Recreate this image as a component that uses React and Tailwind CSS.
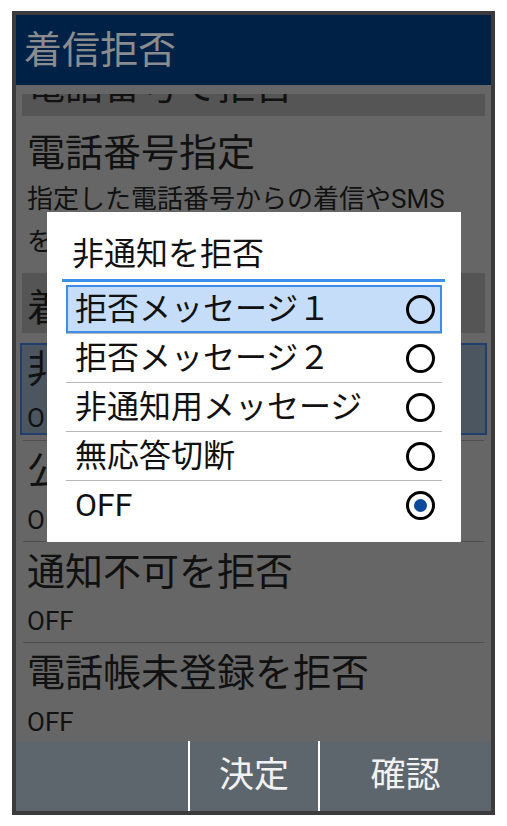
import React from 'react';

const options = [
  { label: '拒否メッセージ１', focused: true },
  { label: '拒否メッセージ２' },
  { label: '非通知用メッセージ' },
  { label: '無応答切断' },
  { label: 'OFF', checked: true },
];

const Radio = ({ checked }) => (
  <div className="w-[29px] h-[29px] rounded-full border-[3px] border-black flex items-center justify-center shrink-0">
    {checked && <div className="w-[13px] h-[13px] rounded-full bg-[#0b4a9b]" />}
  </div>
);

const SettingRow = ({ title, value }) => (
  <div className="shrink-0">
    <div className="mx-[7px] h-px bg-[#4f4f4f]" />
    <div className="h-[100px] px-[11px] overflow-hidden">
      <div className="mt-[7px] h-[46px] leading-[46px] text-[38px] whitespace-nowrap">{title}</div>
      <div className="mt-[8px] h-[36px] leading-[36px] text-[26px]">{value}</div>
    </div>
  </div>
);

const App = () => {
  return (
    <div className="min-h-screen bg-white pt-[11px] pl-[12px] font-['Roboto','Noto_Sans_CJK_JP',sans-serif] text-[#111]">
      <div className="relative w-[483px] h-[804px] border-4 border-[#3b3b3b] flex flex-col overflow-hidden">
        {/* title bar */}
        <div className="h-[70px] shrink-0 bg-[#002146] flex items-center pl-[8px] text-[38px] text-[#8a8c90]">
          着信拒否
        </div>

        {/* dimmed list */}
        <div className="flex-1 bg-[#666666] overflow-hidden flex flex-col">
          <div className="h-[9px] shrink-0" />
          <div className="mx-[6px] h-[22px] shrink-0 bg-[#555555] overflow-hidden">
            <div className="-mt-[31px] pl-[5px] leading-[46px] text-[38px] whitespace-nowrap">電話番号で拒否</div>
          </div>

          <div className="h-[157px] shrink-0 px-[11px] overflow-hidden">
            <div className="mt-[14px] h-[42px] leading-[46px] text-[38px] whitespace-nowrap">電話番号指定</div>
            <div className="mt-[6px] leading-[43px] text-[26px] whitespace-nowrap">
              <div>指定した電話番号からの着信やSMS</div>
              <div>を拒否します</div>
            </div>
          </div>

          <div className="mx-[6px] h-[60px] shrink-0 bg-[#555555] overflow-hidden">
            <div className="pl-[5px] leading-[70px] text-[38px] whitespace-nowrap">着信拒否の種類</div>
          </div>

          <div className="mt-[10px] mx-[4px] h-[92px] shrink-0 border-2 border-[#1f3e6b] bg-[#4b5661] pl-[5px] overflow-hidden">
            <div className="mt-[1px] h-[46px] leading-[46px] text-[38px] whitespace-nowrap">非通知を拒否</div>
            <div className="mt-[8px] h-[36px] leading-[36px] text-[26px]">OFF</div>
          </div>
          <div className="h-[5px] shrink-0" />

          <SettingRow title="公衆電話を拒否" value="OFF" />
          <SettingRow title="通知不可を拒否" value="OFF" />
          <SettingRow title="電話帳未登録を拒否" value="OFF" />
        </div>

        {/* soft keys */}
        <div className="h-[70px] shrink-0 bg-[#5e666d] flex text-[35px] text-[#f2f2f2]">
          <div className="w-[172px]" />
          <div className="w-[2px] bg-white" />
          <div className="w-[128px] flex items-center justify-center">決定</div>
          <div className="w-[2px] bg-white" />
          <div className="flex-1 flex items-center justify-center">確認</div>
        </div>

        {/* dialog */}
        <div className="absolute left-[31px] top-[197px] w-[414px] h-[330px] bg-white">
          <div className="pt-[22px] pl-[25px] h-[62px] leading-[40px] text-[32px]">非通知を拒否</div>
          <div className="mt-[5px] ml-[15px] mr-[16px] h-[3px] bg-[#3a92e8]" />
          <div className="mt-[3px] mx-[19px] flex flex-col">
            {options.map((o, i) => (
              <React.Fragment key={o.label}>
                {i > 0 && <div className="h-px bg-[#b8b8b8]" />}
                <div
                  className={
                    o.focused
                      ? 'h-[48px] flex items-center justify-between pl-[7px] pr-[5px] bg-[#c5ddf8] border-2 border-[#3b8de5]'
                      : 'h-[48px] flex items-center justify-between pl-[9px] pr-[7px]'
                  }
                >
                  <span className="text-[32px] leading-none whitespace-nowrap">{o.label}</span>
                  <Radio checked={o.checked} />
                </div>
              </React.Fragment>
            ))}
          </div>
        </div>
      </div>
    </div>
  );
};

export default App;
